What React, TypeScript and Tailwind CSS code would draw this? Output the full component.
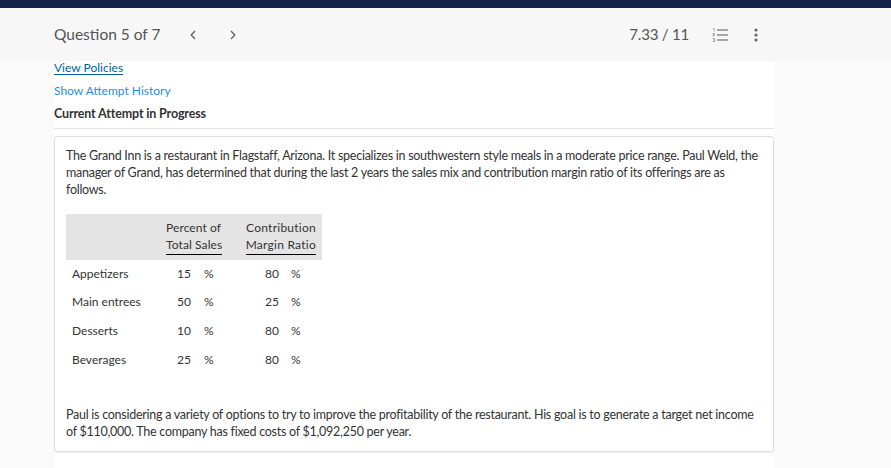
import React from 'react';

const rows = [
  { name: 'Appetizers', percent: '15', margin: '80' },
  { name: 'Main entrees', percent: '50', margin: '25' },
  { name: 'Desserts', percent: '10', margin: '80' },
  { name: 'Beverages', percent: '25', margin: '80' },
];

const ListIcon = () => (
  <svg width="16" height="14" viewBox="0 0 16 14" fill="none">
    <path d="M5 2h11M5 7h11M5 12h11" stroke="#8a8a8a" strokeWidth="1.4" />
    <path d="M1 .5h1.2v3M.8 5.5h1.8v1.2H1v1.3h1.8M.8 10.5h1.8v3H.8M1.2 12h1.4" stroke="#8a8a8a" strokeWidth="0.7" />
  </svg>
);

const App = () => {
  return (
    <div className="w-[891px] h-[468px] overflow-hidden bg-[#fafafa] font-['Lato','Open_Sans',sans-serif] text-[#333]">
      <div className="h-2 bg-[#13204a]" />
      <header className="h-[53px] bg-[#f7f7f7] flex items-center pl-[54px] pr-[145px]">
        <span className="text-[15.5px] text-[#555] w-[136px]">Question 5 of 7</span>
        <svg width="6" height="10" viewBox="0 0 6 10" fill="none">
          <path d="M5 1 1.2 5 5 9" stroke="#666" strokeWidth="1.4" />
        </svg>
        <svg width="6" height="10" viewBox="0 0 6 10" fill="none" className="ml-[34px]">
          <path d="M1 1l3.8 4L1 9" stroke="#666" strokeWidth="1.4" />
        </svg>
        <span className="ml-auto text-[15px] tracking-[-0.2px] text-[#555]">7.33 / 11</span>
        <span className="ml-[23px]"><ListIcon /></span>
        <svg width="4" height="14" viewBox="0 0 4 14" className="ml-[26px] mr-[-12px]">
          <circle cx="2" cy="2" r="1.6" fill="#666" />
          <circle cx="2" cy="7" r="1.6" fill="#666" />
          <circle cx="2" cy="12" r="1.6" fill="#666" />
        </svg>
      </header>
      <main className="ml-[54px] w-[720px] bg-white h-[407px] flow-root">
        <div className="h-[68px] border-b border-[#e6e6e6] text-[12px] leading-[18px]">
          <div className="h-[14px] leading-[14px]">
            <a className="text-[#005f9e] underline underline-offset-2">View Policies</a>
          </div>
          <div className="mt-[7px] text-[#2d8be0]">Show Attempt History</div>
          <div className="mt-[5px] font-bold text-[#333] text-[12.5px] tracking-[-0.15px]">Current Attempt in Progress</div>
        </div>
        <section className="mt-[7px] h-[316px] bg-white border border-[#ddd] rounded-[3px] shadow-[0_1px_1px_rgba(0,0,0,0.08)] px-[11px] pt-[10px] text-[12px] leading-[17px]">
          <p className="text-[12.5px] tracking-[-0.26px]">
            The Grand Inn is a restaurant in Flagstaff, Arizona. It specializes in southwestern style meals in a moderate price range. Paul Weld, the manager of Grand, has determined that during the last 2 years the sales mix and contribution margin ratio of its offerings are as follows.
          </p>
          <div className="mt-[16px] w-[256px]">
            <div className="h-[46px] bg-[#e4e4e4] grid grid-cols-[94px_68px_94px] items-center text-center leading-[17px]">
              <div />
              <div className="flex flex-col items-start pl-[6px] tracking-[0.1px]">
                <span>Percent of</span>
                <span className="border-b border-black pb-[1px]">Total Sales</span>
              </div>
              <div className="flex flex-col items-end pr-[6px] tracking-[0.25px]">
                <span>Contribution</span>
                <span className="border-b border-black pb-[1px]">Margin Ratio</span>
              </div>
            </div>
            <div className="mt-[-1px]">
              {rows.map((row) => (
                <div key={row.name} className="h-[28.6px] grid grid-cols-[94px_68px_94px] items-center">
                  <span className="pl-[6px]">{row.name}</span>
                  <span className="pl-[17px] flex gap-[13px]"><span>{row.percent}</span><span>%</span></span>
                  <span className="pl-[37px] flex gap-[12px]"><span>{row.margin}</span><span>%</span></span>
                </div>
              ))}
            </div>
          </div>
          <p className="mt-[33px] text-[12.5px] tracking-[-0.26px]">
            Paul is considering a variety of options to try to improve the profitability of the restaurant. His goal is to generate a target net income of $110,000. The company has fixed costs of $1,092,250 per year.
          </p>
        </section>
      </main>
    </div>
  );
};

export default App;
